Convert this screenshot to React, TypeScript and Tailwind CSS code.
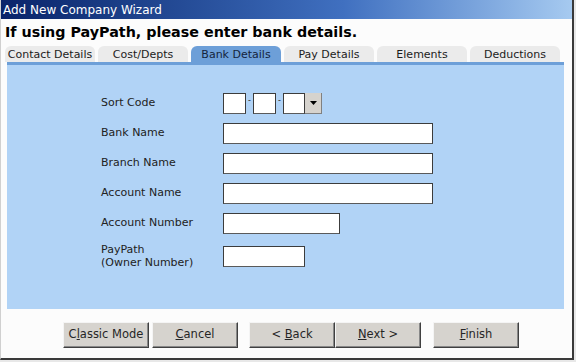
// Add New Company Wizard - Bank Details step

const tabs = ['Contact Details', 'Cost/Depts', 'Bank Details', 'Pay Details', 'Elements', 'Deductions'];

function TextBox({ w }: { w: string }) {
  return <div className={`h-[21px] ${w} bg-white border border-[#3c3c3c] border-b-[#5a5a5a]`} />;
}

function Button({ children }: { children: React.ReactNode }) {
  return (
    <div className="w-[86px] h-[26px] flex items-center justify-center bg-[#d6d3ce] border border-t-[#f4f4f4] border-l-[#f4f4f4] border-r-[#404040] border-b-[#404040] shadow-[inset_-1px_-1px_0_#888] text-[11.5px] text-[#262626]">
      <span className="whitespace-pre">{children}</span>
    </div>
  );
}

export default function App() {
  return (
    <div className="w-[576px] h-[362px] bg-[#e8e8e8]" style={{ fontFamily: '"DejaVu Sans", Verdana, sans-serif' }}>
      <div className="w-[574px] h-[360px] bg-[#fcfcfc] border-l border-[#d0d0d0] border-r-2 border-r-[#3a3a3a] border-b-2 border-b-[#3a3a3a] flex flex-col">
        {/* title bar */}
        <div className="h-[19px] bg-gradient-to-r from-[#0a246a] via-[#4070c0] via-60% to-[#a6caf0] flex items-center pl-[2px] text-white text-[12px] leading-none">
          Add New Company Wizard
        </div>

        {/* heading */}
        <div className="h-[27px] flex items-center pl-[4px] pt-[1px] text-[14.3px] font-bold text-black">
          If using PayPath, please enter bank details.
        </div>

        {/* tabs */}
        <div className="flex gap-[3px] pl-[4px] h-[16px]">
          {tabs.map((t) => (
            <div
              key={t}
              className={`w-[90px] h-[16px] rounded-t-[6px] flex items-center justify-center text-[11px] leading-none ${
                t === 'Bank Details' ? 'bg-[#6d9fd8] text-[#14243c]' : 'bg-[#ebebeb] text-[#1c1c1c]'
              }`}
            >
              {t}
            </div>
          ))}
        </div>

        {/* panel */}
        <div className="ml-[6px] w-[557px]">
          <div className="h-[3px] bg-[#6d9fd8]" />
          <div className="h-[244px] bg-[#b1d3f6] pt-[28px] pl-[94px]">
            <div className="grid grid-cols-[122px_auto] gap-y-[9px] text-[11px] text-[#222] items-center">
              <div>Sort Code</div>
              <div className="flex items-center">
                <TextBox w="w-[23px]" />
                <span className="w-[7px] text-center text-[8px] leading-none -mt-[6px]">-</span>
                <TextBox w="w-[23px]" />
                <span className="w-[7px] text-center text-[8px] leading-none -mt-[6px]">-</span>
                <TextBox w="w-[22px]" />
                <div className="w-[17px] h-[21px] bg-[#d6d3ce] border-r border-b border-[#808080] flex items-center justify-center">
                  <svg width="7" height="4" viewBox="0 0 7 4">
                    <path d="M0 0h7L3.5 4z" fill="#000" />
                  </svg>
                </div>
              </div>

              <div>Bank Name</div>
              <TextBox w="w-[210px]" />

              <div>Branch Name</div>
              <TextBox w="w-[210px]" />

              <div>Account Name</div>
              <TextBox w="w-[210px]" />

              <div>Account Number</div>
              <TextBox w="w-[117px]" />

              <div className="leading-[13px]">
                PayPath
                <br />
                (Owner Number)
              </div>
              <TextBox w="w-[82px]" />
            </div>
          </div>
        </div>

        {/* buttons */}
        <div className="flex pl-[62px] pt-[13px]">
          <Button>
            C<span className="underline">l</span>assic Mode
          </Button>
          <div className="w-[3px]" />
          <Button>
            <span className="underline">C</span>ancel
          </Button>
          <div className="w-[11px]" />
          <Button>
            {'< '}<span className="underline">B</span>ack
          </Button>
          <Button>
            <span className="underline">N</span>
            {'ext >'}
          </Button>
          <div className="w-[12px]" />
          <Button>
            <span className="underline">F</span>inish
          </Button>
        </div>
      </div>
    </div>
  );
}
